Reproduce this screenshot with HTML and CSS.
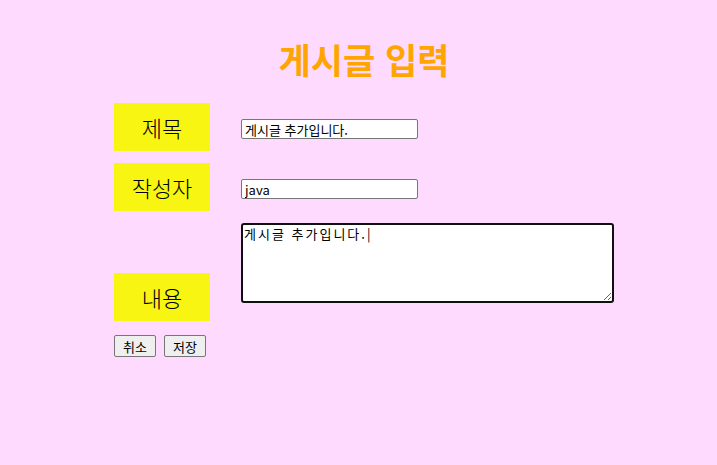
FILE: index.html
```html
<!DOCTYPE html>
<html lang="ko">
<head>
<meta charset="utf-8">
<title>게시글 입력</title>
<link rel="stylesheet" href="styles.css">
</head>
<body>
<div class="page">
  <h1 class="title">게시글 입력</h1>
  <form class="form">
    <div class="label">제목</div>
    <input class="field" type="text" value="게시글 추가입니다.">
    <div class="label">작성자</div>
    <input class="field" type="text" value="java">
    <div class="label label-bottom">내용</div>
    <textarea class="content">게시글 추가입니다.|</textarea>
    <div class="buttons">
      <button type="button" class="btn">취소</button>
      <button type="button" class="btn">저장</button>
    </div>
  </form>
</div>
</body>
</html>
```

FILE: styles.css
```css
html, body {
  margin: 0;
  padding: 0;
  background: #ffdaff;
}
.page {
  width: 500px;
  padding: 34px 0 0 114px;
  font-family: "Noto Sans CJK KR", sans-serif;
}
.title {
  margin: 0;
  height: 57px;
  line-height: 50px;
  font-size: 35px;
  font-weight: bold;
  color: #ffa500;
  text-align: center;
}
.form {
  margin-top: 12px;
  display: grid;
  grid-template-columns: 96px 373px;
  grid-template-rows: 48px 48px 98px auto;
  column-gap: 31px;
  row-gap: 12px;
}
.label {
  background: #f8f512;
  color: #000;
  font-family: "Noto Sans CJK KR", serif;
  font-size: 22px;
  font-weight: 300;
  display: flex;
  align-items: center;
  justify-content: center;
  height: 48px;
}
.label-bottom {
  align-self: end;
}
.field {
  align-self: start;
  margin: 16px 0 0 0;
  width: 177px;
  height: 20px;
  box-sizing: border-box;
  border: 1px solid #767676;
  border-radius: 2px;
  padding: 0 3px;
  font-family: "Noto Sans CJK KR", sans-serif;
  font-size: 13px;
  color: #000;
  background: #fff;
}
.content {
  align-self: start;
  margin: 0;
  width: 373px;
  height: 80px;
  box-sizing: border-box;
  border: 2px solid #101010;
  border-radius: 3px;
  padding: 1px;
  font-family: "Noto Sans CJK KR", monospace;
  font-size: 13px;
  line-height: 16px;
  letter-spacing: 2px;
  color: #000;
  background: #fff;
  resize: both;
  outline: none;
}
.buttons {
  grid-column: 1 / 3;
  display: flex;
  gap: 8px;
  margin-top: 2px;
}
.btn {
  height: 22px;
  padding: 0 8px;
  font-family: "Noto Sans CJK KR", sans-serif;
  font-size: 13px;
  color: #000;
  background: #efefef;
  border: 1px solid #767676;
  border-radius: 2px;
}
```
